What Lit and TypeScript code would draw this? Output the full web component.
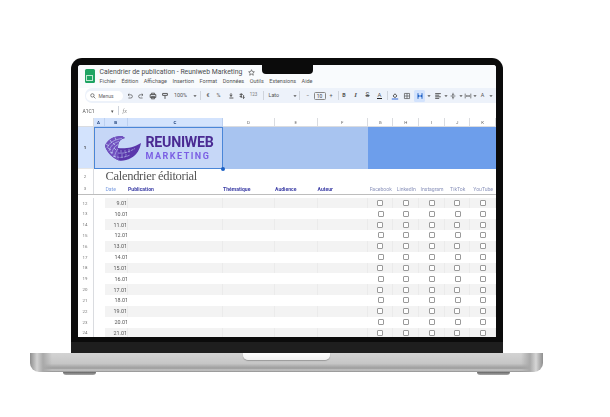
import { LitElement, html, css, svg } from "lit";
import { customElement } from "lit/decorators.js";

const I = (c: unknown) => html`<svg class="ic" viewBox="0 0 10 10">${c}</svg>`;
const dd = html`<svg class="ic" viewBox="0 0 10 10"><path class="fill" d="M3 4h4L5 6.4z"/></svg>`;
const tool: [number, unknown][] = [
  [10, I(svg`<path d="M2.5 3.5h3.5a2 2 0 0 1 0 4H3M2.5 3.5l1.6-1.5M2.5 3.5l1.6 1.5"/>`)],
  [12, I(svg`<path d="M7.5 3.5H4a2 2 0 0 0 0 4h3M7.5 3.5L5.9 2M7.5 3.5L5.9 5"/>`)],
  [13, I(svg`<path d="M3 3V1.5h4V3M1.5 3.2h7v3.6h-7zM3 5.5h4v3H3z" class="thick"/>`)],
  [10, I(svg`<path d="M2 1.8h6v2.4H2zM5 4.2v4.4" class="thick"/>`)],
  [22, html`<span class="t">100%</span>`],
  [6, dd],
  [6, html`<i class="sep"></i>`],
  [9, html`<span class="t">€</span>`],
  [12, html`<span class="t">%</span>`],
  [13, I(svg`<path d="M5 1.5v4M3.5 3.5l1.5 2 1.5-2M3 7.5h5" class="thick"/>`)],
  [8, I(svg`<path d="M4 1.5v6M2 3h4M2 5.5h3M7 4v4M5.8 6.8L7 8l1.2-1.2" class="thick"/>`)],
  [16, html`<span class="t tiny">123</span>`],
  [4, html`<i class="sep"></i>`],
  [26, html`<span class="t left">Lato</span>`],
  [6, dd],
  [4, html`<i class="sep"></i>`],
  [12, html`<span class="t">−</span>`],
  [12, html`<span class="size">10</span>`],
  [11, html`<span class="t">+</span>`],
  [3, html`<i class="sep"></i>`],
  [9, html`<b class="t">B</b>`],
  [14, html`<i class="t it">I</i>`],
  [10, html`<span class="t strike">S</span>`],
  [14, html`<span class="t ula">A</span>`],
  [2, html`<i class="sep"></i>`],
  [13, I(svg`<path d="M2.5 5L5 2.2 7.5 5 5 7z" class="thick"/><path d="M1 8.8h8" class="blue"/>`)],
  [11, I(svg`<path d="M1.8 1.8h6.4v6.4H1.8zM5 1.8v6.4M1.8 5h6.4"/>`)],
  [14, html`<span class="on">${I(svg`<path d="M2.5 1.5v7M7.5 1.5v7M2.5 5h5M3.5 3.8L2.5 5l1 1.2M6.5 3.8L7.5 5l-1 1.2" class="strong"/>`)}</span>`],
  [5, dd],
  [12, I(svg`<path d="M1.5 2h7M1.5 4h5M1.5 6h7M1.5 8h5" class="thick"/>`)],
  [4, dd],
  [11, I(svg`<path d="M2 5h6M5 1v3M5 6v3M3.8 2.8L5 4l1.2-1.2M3.8 7.2L5 6l1.2 1.2"/>`)],
  [4, dd],
  [10, I(svg`<path d="M1.5 2v6M8.5 2v6M3 5h4M4 3.8L3 5l1 1.2M6 3.8L7 5 6 6.2"/>`)],
  [4, dd],
  [12, html`<span class="t">A</span>`],
  [4, dd],
];
const menus = ["Fichier", "Édition", "Affichage", "Insertion", "Format", "Données", "Outils", "Extensions", "Aide"];
const letters = ["A", "B", "C", "D", "E", "F", "G", "H", "I", "J", "K"];
const socials = ["Facebook", "LinkedIn", "Instagram", "TikTok", "YouTube"];
const days = Array.from({ length: 13 }, (_, i) => i);

@customElement("app-root")
export class AppRoot extends LitElement {
  static styles = css`
    :host { display: block; width: 610px; height: 417px; background: #fff; font-family: Roboto, "Liberation Sans", sans-serif; color: #444; overflow: hidden; }
    .page { display: flex; flex-direction: column; align-items: center; padding-top: 58px; padding-right: 37px; }
    .bezel { position: relative; width: 418px; height: 272px; padding: 7px 7px 16px; background: linear-gradient(#0b0b0b 0 284px, #1e1e1e 284px); border-radius: 11px 11px 0 0; flex: none; }
    .notch { position: absolute; left: 191px; top: 0; width: 51px; height: 16px; background: #0b0b0b; border-radius: 0 0 4px 4px; }
    .screen { height: 272px; background: #fff; overflow: hidden; border-radius: 3px 3px 0 0; filter: blur(0.6px); }
    .base { position: relative; width: 513px; height: 19px; flex: none; border-radius: 0 0 9px 9px; background:
      linear-gradient(90deg, #8e8e8e 0, #d2d2d2 7px, #a9a9a9 13px, transparent 22px, transparent 491px, #a9a9a9 500px, #d6d6d6 506px, #8e8e8e 513px),
      linear-gradient(#d3d3d3 0, #c6c6c6 55%, #9c9c9c 80%, #c9c9c9 90%, #8d8d8d 100%); }
    .lip { position: absolute; left: 213px; top: 0; width: 87px; height: 7px; background: linear-gradient(#fff, #f1f1f1); border-radius: 0 0 5px 5px; box-shadow: 0 1px 1px #999; }
    .feet { width: 447px; display: flex; justify-content: space-between; flex: none; }
    .feet i { width: 33px; height: 3px; background: linear-gradient(#666, #aaa); border-radius: 0 0 8px 8px; }

    .head { display: flex; height: 23px; background: #f9fbfd; padding-left: 7px; gap: 5px; }
    .sheets { width: 10px; height: 14px; margin-top: 4px; background: #1fa463; border-radius: 1.5px; display: flex; align-items: center; justify-content: center; }
    .sheets i { width: 5px; height: 4px; border: 1px solid #bfe8d0; margin-top: 3px; }
    .tm { display: flex; flex-direction: column; }
    .title { display: flex; align-items: center; gap: 6px; font-size: 6.85px; height: 13px; color: #4a4d50; white-space: nowrap; padding-top: 1px; box-sizing: border-box; }
    .title svg { width: 7px; height: 7px; fill: none; stroke: #555; stroke-width: 1; }
    .menu { display: flex; gap: 5.5px; font-size: 5.5px; color: #555; white-space: nowrap; }

    .bar { height: 15px; margin-left: 7px; background: #edf2fa; border-radius: 7px 0 0 7px; display: flex; align-items: center; padding-left: 1px; overflow: hidden; }
    .search { width: 37px; height: 10px; margin-right: 2px; background: #fff; border-radius: 5px; display: flex; align-items: center; gap: 3px; padding-left: 4px; box-sizing: border-box; font-size: 5px; color: #666; flex: none; }
    .search svg { width: 6px; height: 6px; fill: none; stroke: #555; stroke-width: 1.2; }
    .tool { display: flex; align-items: center; justify-content: center; height: 15px; flex: none; }
    .ic { width: 8px; height: 8px; flex: none; fill: none; stroke: #555; stroke-width: .9; }
    .ic .thick { stroke-width: 1.2; }
    .ic .strong { stroke: #1a5fc4; stroke-width: 1.2; }
    .ic .blue { stroke: #3367d6; stroke-width: 1.4; }
    .ic .fill { fill: #555; stroke: none; }
    .sep { width: 1px; height: 9px; background: #cfd4dc; display: block; }
    .t { font-size: 5.4px; color: #555; font-style: normal; line-height: 1; }
    .tiny { font-size: 4.5px; color: #777; }
    .left { width: 100%; padding-left: 3px; }
    .it { font-family: "Liberation Serif", serif; font-style: italic; font-size: 7px; font-weight: 700; }
    .strike { text-decoration: line-through; font-size: 6.5px; }
    .ula { border-bottom: 1.5px solid #222; font-size: 6px; padding: 0 1px; }
    .size { width: 12px; height: 8px; border: 1px solid #888; box-sizing: border-box; border-radius: 1.5px; font-size: 5px; text-align: center; line-height: 6px; color: #444; }
    .on { background: #d3e3fd; border-radius: 1.5px; width: 11px; height: 12px; display: flex; align-items: center; justify-content: center; }

    .fx { height: 15px; display: flex; align-items: center; font-size: 5px; color: #555; padding-left: 5px; background: #fff; }
    .fx .name { width: 28px; }
    .fx .c { width: 6px; }
    .fx .sep { margin: 0 4px 0 1px; }
    .fx em { font-family: "Liberation Serif", serif; color: #888; font-size: 6px; }

    .row { display: grid; grid-template-columns: 16px 11px 23.5px 95px 52px 42.5px 50.5px 25.4px 25.8px 25.8px 25.4px 25.6px; box-sizing: border-box; }
    .cols { height: 9px; background: #fff; font-size: 4.4px; color: #666; }
    .cols > div { display: flex; align-items: center; justify-content: center; border-right: 1px solid #dadce0; border-bottom: 1px solid #dadce0; box-sizing: border-box; }
    .cols .sel { background: #d3e3fd; color: #1d3f78; font-weight: 700; border-color: #bcd0f0; }
    .num { display: flex; align-items: center; justify-content: center; font-size: 4.4px; color: #777; border-right: 1px solid #dadce0; border-bottom: 1px solid #e6e6e6; box-sizing: border-box; background: #fff; }
    .r1 { height: 42px; }
    .r1 .num { background: #d3e3fd; color: #333; font-weight: 700; }
    .logo { grid-column: span 3; position: relative; display: flex; align-items: center; gap: 4px; padding-left: 9px; box-sizing: border-box; background: #c6d7f7; border: 1px solid #4a86d8; }
    .logo svg { width: 38px; height: 27px; flex: none; }
    .wm { display: flex; flex-direction: column; gap: 2.5px; white-space: nowrap; font-family: Roboto, "Liberation Sans", sans-serif; font-weight: 700; line-height: 1; }
    .w1 { font-size: 14.2px; color: #4a2a93; letter-spacing: -.25px; }
    .w2 { font-size: 9px; color: #7b5fe3; letter-spacing: 1.5px; }
    .dot { position: absolute; right: -3px; bottom: -3px; width: 4px; height: 4px; border-radius: 50%; background: #1a5fc4; }
    .band-l { grid-column: span 3; background: #a8c4f0; }
    .band-d { grid-column: span 5; background: #6d9eeb; }
    .r2 { height: 14px; }
    .cal { display: flex; align-items: center; padding-left: 1px; font-family: "Liberation Serif", serif; font-size: 12.5px; letter-spacing: -.3px; color: #555; white-space: nowrap; grid-column: span 10; }
    .r3 { height: 12px; border-bottom: 1px solid #bdbdbd; font-size: 5.1px; }
    .r3 > div:not(.num) { display: flex; align-items: center; white-space: nowrap; }
    .r3 .num { border-bottom: none; }
    .date { padding-left: 1px; color: #7fa0e2; }
    .bl { color: #3d3fa6; font-weight: 700; }
    .soc { justify-content: center; color: #8b93bb; font-size: 5.1px; }
    .rows { margin-top: 2.6px; }
    .day { height: 10.83px; }
    .day .num { border-bottom: none; }
    .gray > :not(.num):not(.sp) { background: #f3f3f3; border-right: 1px solid #ebebeb; box-sizing: border-box; }
    .dv { display: flex; align-items: center; justify-content: flex-end; font-size: 5.4px; color: #555; }
    .cb { display: flex; align-items: center; justify-content: center; }
    .cb i { width: 6px; height: 6px; box-sizing: border-box; border: 1px solid #9a9a9a; border-radius: 1px; background: #fff; display: block; }
  `;

  render() {
    const swoosh = svg`
      <path d="M1 11C3 5 9 1 18 1L21 3C16 4 14 7 14 13C20 14 29 13 37 8C36 14 33 20 27 23C23 25.5 18 26 15 25.5C9 23 3 18 1 11Z" fill="#5a36ab"/>
      <path d="M1 11C3 5 9 1 18 1L21 3C16 4 14 7 14 13L15 25.5C9 23 3 18 1 11Z" fill="#7151bf"/>
      <g fill="none" stroke="#c6d7f7" stroke-width=".55">
        <path d="M3 13C5 8 10 4.5 18 3.5"/>
        <path d="M5 16C6.5 11 10 7.5 15 6.5"/>
        <path d="M7.5 19C8.5 15 10 11.5 14 9.5"/>
        <path d="M10.5 22C11 19 12 16 14 14"/>
        <path d="M2 9L5 11M6 5L8 8M11 2.5L12 5M4 13L7 15M9 8L11 10M6 17L9 18M10 13L12 15M9 21L12 22" stroke-width=".7"/>
        <path d="M13 22C17 23 22 22 26 20M14 18C19 19 25 17 31 13.500" stroke-dasharray="2.6 .8"/>
        <path d="M17 15v3.500M21 15v3.500M25 14v3.500M18 19v3.500M22 19v3" stroke-width=".5"/>
      </g>`;
    return html`<div class="page">
      <div class="bezel">
        <div class="screen">
          <div class="head">
            <div class="sheets"><i></i></div>
            <div class="tm">
              <div class="title"><span>Calendrier de publication - Reuniweb Marketing</span>
                <svg viewBox="0 0 10 10"><path d="M5 1l1.2 2.7 2.9.3-2.2 2 .7 2.9L5 7.4 2.4 8.9l.7-2.9-2.2-2 2.9-.3z"/></svg></div>
              <div class="menu">${menus.map((m) => html`<span>${m}</span>`)}</div>
            </div>
          </div>
          <div class="bar">
            <div class="search"><svg viewBox="0 0 10 10"><circle cx="4" cy="4" r="2.8"/><path d="M6 6l3 3"/></svg><span>Menus</span></div>
            ${tool.map(([w, c]) => html`<div class="tool" style="width:${w}px">${c}</div>`)}
          </div>
          <div class="fx"><span class="name">A1C1</span><span class="c">▾</span><i class="sep"></i><em>fx</em></div>

          <div class="row cols"><div></div>${letters.map((l, i) => html`<div class=${i < 3 ? "sel" : ""}>${l}</div>`)}</div>
          <div class="row r1">
            <div class="num">1</div>
            <div class="logo"><svg viewBox="0 0 38 27">${swoosh}</svg>
              <div class="wm"><span class="w1">REUNIWEB</span><span class="w2">MARKETING</span></div><i class="dot"></i></div>
            <div class="band-l"></div><div class="band-d"></div>
          </div>
          <div class="row r2"><div class="num">2</div><div></div><div class="cal">Calendrier éditorial</div></div>
          <div class="row r3">
            <div class="num">3</div><div></div>
            <div class="date">Date</div>
            <div class="bl">Publication</div><div class="bl">Thématique</div><div class="bl">Audience</div><div class="bl">Auteur</div>
            ${socials.map((s) => html`<div class="soc">${s}</div>`)}
          </div>
          <div class="rows">
            ${days.map((i) => html`<div class="row day ${i % 2 === 0 ? "gray" : ""}">
              <div class="num">${12 + i}</div><div class="sp"></div>
              <div class="dv">${9 + i}.01</div>
              <div></div><div></div><div></div><div></div>
              ${socials.map(() => html`<div class="cb"><i></i></div>`)}
            </div>`)}
          </div>
        </div>
        <div class="notch"></div>
      </div>
      <div class="base"><div class="lip"></div></div>
      <div class="feet"><i></i><i></i></div>
    </div>`;
  }
}
